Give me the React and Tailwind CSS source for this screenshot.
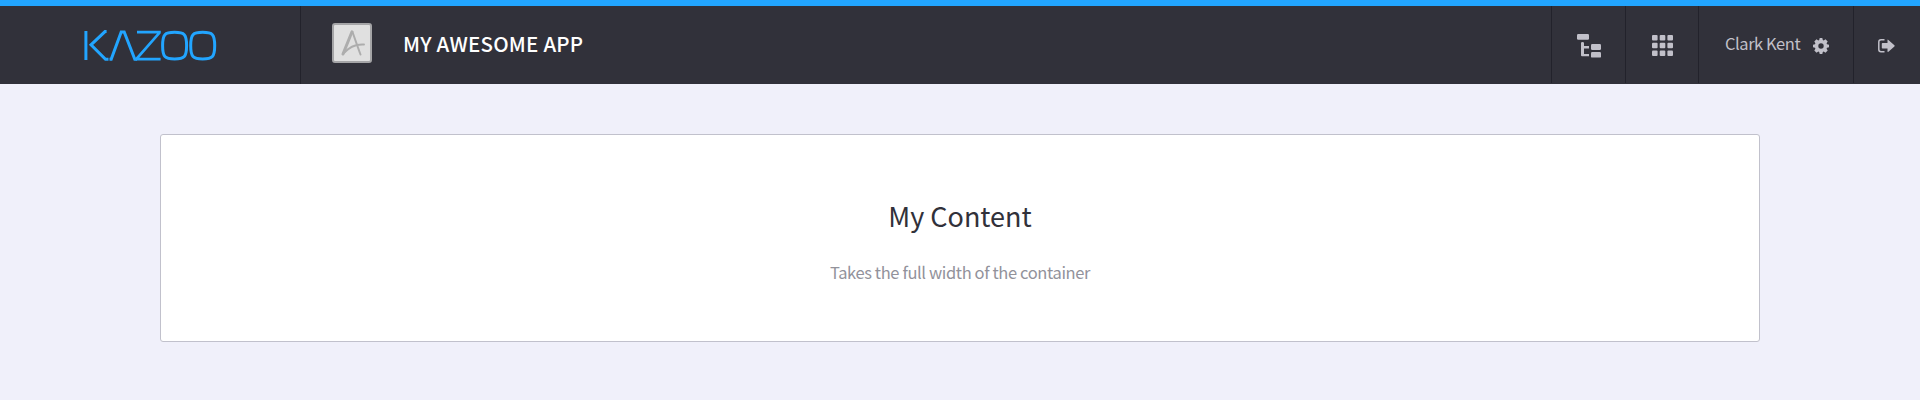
import React from "react";

const Logo = () => (
  <svg width="134" height="32" viewBox="0 0 134 32" fill="none" stroke="#22a5ff" strokeWidth="3" className="block" aria-label="KAZOO">
    <path d="M2.9 1v29" />
    <path d="M23.6 1.6H22L8 14.8 22.500 29.2h3" />
    <path d="M26.500 29.200H28.200L38.200 2H41.200L51.800 29.200H54" />
    <path d="M54 2.100H76.400V2.800L53.800 28.600V29.200H77.600" strokeWidth="2.700" />
    <path d="M91.600 2.300C101.400 2.300 103.600 4.200 103.600 15.600S101.400 29 91.600 29 79.600 27 79.600 15.600 81.800 2.300 91.600 2.300Z" />
    <path d="M119.700 2.300C129.500 2.300 131.700 4.200 131.700 15.600S129.500 29 119.700 29 107.700 27 107.700 15.600 109.900 2.300 119.700 2.300Z" />
  </svg>
);

const AppIcon = () => (
  <svg width="40" height="40" viewBox="0 0 40 40" fill="none" className="block">
    <rect x="1" y="1" width="38" height="38" rx="2" fill="#e0e0e0" stroke="#a5a5a7" strokeWidth="2" />
    <g stroke="#adadad" strokeLinecap="round" strokeLinejoin="round">
      <path d="M20 8.800 11 31" strokeWidth="3" />
      <path d="M20.500 9C23 16 26 25 28.500 31.500" strokeWidth="2" />
      <path d="M11.500 30.500C17 24 25 21 32 21.500" strokeWidth="1.900" />
    </g>
  </svg>
);

const TreeIcon = () => (
  <svg width="24" height="24" viewBox="0 0 24 24" fill="#c1c0c9" className="block">
    <rect x="0" y="0" width="12" height="5.700" rx="1.200" />
    <rect x="14" y="10" width="10" height="6" rx="1.200" />
    <rect x="14" y="18" width="10" height="5.600" rx="1.200" />
    <path d="M4 9q0-1 1.500-1T7 9v3h5v2.400H7v5.600h5v2.300H5q-1 0-1-1Z" />
  </svg>
);

const GridIcon = () => (
  <svg width="21" height="21" viewBox="0 0 21 21" fill="#c1c0c9" className="block">
    {[0, 7.7, 15.4].map((y) =>
      [0, 7.7, 15.4].map((x) => <rect key={`${x}-${y}`} x={x} y={y} width="5.600" height="5.600" rx="1" />)
    )}
  </svg>
);

const GearIcon = () => (
  <svg width="16" height="16" viewBox="0 0 16 16" fill="#c1c0c9" fillRule="evenodd" className="block">
    <path d="M6.700 0h2.600l.5 2 .9.400L12.500 1.300l2.200 2.200-1.100 1.800.4.900 2 .5v2.600l-2 .5-.4.900 1.100 1.800-2.200 2.200-1.800-1.100-.9.400-.5 2H6.700l-.5-2-.9-.4-1.800 1.100-2.200-2.200 1.100-1.800-.4-.9-2-.5V6.700l2-.5.4-.9L1.300 3.500l2.200-2.200 1.800 1.100.9-.4ZM8 5.300a2.700 2.700 0 1 0 0 5.400 2.700 2.700 0 0 0 0-5.400Z" />
  </svg>
);

const ExitIcon = () => (
  <svg width="17" height="14" viewBox="0 0 17 14" fill="none" className="block">
    <path d="M6.500.8H3Q.8.800.8 3v7.500q0 2.200 2.200 2.200h3.500" stroke="#c1c0c9" strokeWidth="1.500" />
    <path d="M4.500 4h5V1.200q0-1 .9-.3l6 5.300q.6.600 0 1.200l-6 5.300q-.9.600-.9-.4V9.500h-5q-.7 0-.7-.7V4.700q0-.7.7-.7Z" fill="#c1c0c9" />
  </svg>
);

export default function App() {
  return (
    <div className="min-h-[400px] bg-[#f0f0fa] font-['Noto_Sans_CJK_SC',sans-serif]">
      <header className="flex h-[84px] border-t-[6px] border-[#22a5ff] bg-[#31313a]">
        <div className="w-[301px] border-r border-[#22222b] pt-6 pl-[83px]">
          <Logo />
        </div>
        <div className="flex grow pt-[17px] pl-[31px]">
          <AppIcon />
          <h1 className="pl-[31px] text-[20.5px] leading-[40px] font-medium tracking-[0.2px] whitespace-nowrap text-white">MY AWESOME APP</h1>
        </div>
        <nav className="flex h-[77px]">
          <div className="w-[74px] border-l border-[#22222b] pt-7 pl-[25px]"><TreeIcon /></div>
          <div className="w-[73px] border-l border-[#22222b] pt-[29px] pl-[26px]"><GridIcon /></div>
          <div className="flex w-[155px] border-l border-[#22222b] pl-[26px]">
            <span className="w-[88px] pt-[17px] text-[16.5px] leading-[40px] tracking-[-0.45px] whitespace-nowrap text-[#c1c0c9]">Clark Kent</span>
            <span className="pt-8"><GearIcon /></span>
          </div>
          <div className="w-[67px] border-l border-[#22222b] pt-[33px] pl-[24px]"><ExitIcon /></div>
        </nav>
      </header>
      <main className="px-[160px] pt-[50px]">
        <section className="h-[208px] rounded-[3px] border border-[#c1c1cc] bg-white text-center">
          <h2 className="pt-[61px] text-[27px] leading-[40px] text-[#31313a]">My Content</h2>
          <p className="pt-[21px] text-[16.5px] leading-[30px] tracking-[-0.38px] text-[#92929b]">Takes the full width of the container</p>
        </section>
      </main>
    </div>
  );
}
